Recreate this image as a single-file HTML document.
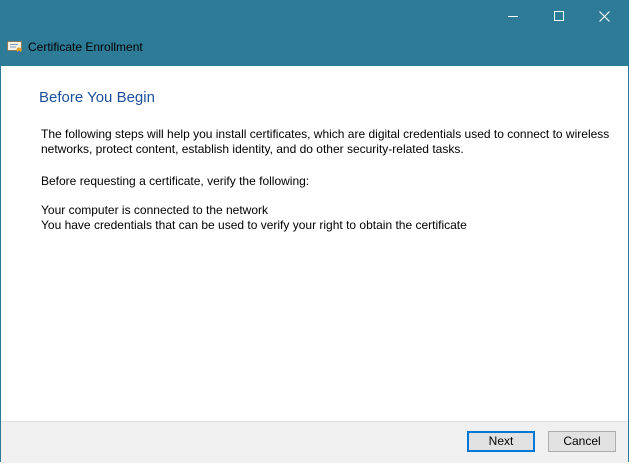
<!DOCTYPE html>
<html><head><style>
body{margin:0;width:633px;height:466px;background:#fff;position:relative;overflow:hidden;font-family:"Liberation Sans",sans-serif;}
.win{position:absolute;left:0;top:0;width:627px;height:461px;border:1px solid #2e7b98;border-top:none;background:#fff;}
.tb{position:absolute;left:0;top:0;width:629px;height:66px;background:#2e7b98;}
.t{position:absolute;font-size:12px;color:#000;white-space:nowrap;}
.b{position:absolute;font-size:12px;color:#000;white-space:nowrap;left:41px;}
.foot{position:absolute;left:1px;top:421px;width:627px;height:41px;background:#f0f0f0;border-top:1px solid #dfdfdf;}
.btn{position:absolute;top:431px;width:66px;height:19px;background:#e1e1e1;border:1px solid #adadad;font-size:12px;text-align:center;line-height:19px;}
</style></head><body>
<div class="win"></div>
<div class="tb">
<svg style="position:absolute;left:7px;top:41px" width="16" height="13" viewBox="0 0 16 13"><rect x="0.5" y="0.5" width="14" height="9" fill="#f5f0e0" stroke="#8a7a5a"/><line x1="3" y1="3.5" x2="11" y2="3.5" stroke="#7a9ac8"/><line x1="3" y1="6" x2="9" y2="6" stroke="#7a9ac8"/><circle cx="12" cy="9" r="2.5" fill="#e0a020"/><rect x="11" y="10" width="2" height="3" fill="#3a6ac0"/></svg>
<div class="t" style="left:28px;top:40px;">Certificate Enrollment</div>
<div style="position:absolute;left:508px;top:16px;width:10px;height:1px;background:#fff"></div>
<div style="position:absolute;left:554px;top:11px;width:8px;height:8px;border:1px solid #fff"></div>
<svg style="position:absolute;left:599px;top:11px" width="11" height="11"><path d="M0.5 0.5L10.5 10.5M10.5 0.5L0.5 10.5" stroke="#fff" stroke-width="1.1"/></svg>
</div>
<div class="t" style="left:39px;top:89px;font-size:15px;color:#1c4f9c;">Before You Begin</div>
<div class="b" style="top:127px">The following steps will help you install certificates, which are digital credentials used to connect to wireless</div>
<div class="b" style="top:142px">networks, protect content, establish identity, and do other security-related tasks.</div>
<div class="b" style="top:174px">Before requesting a certificate, verify the following:</div>
<div class="b" style="top:203px">Your computer is connected to the network</div>
<div class="b" style="top:218px">You have credentials that can be used to verify your right to obtain the certificate</div>
<div class="foot"></div>
<div class="btn" style="left:467px;border:2px solid #0078d7;width:64px;height:17px;line-height:17px;">Next</div>
<div class="btn" style="left:548px;">Cancel</div>
</body></html>
